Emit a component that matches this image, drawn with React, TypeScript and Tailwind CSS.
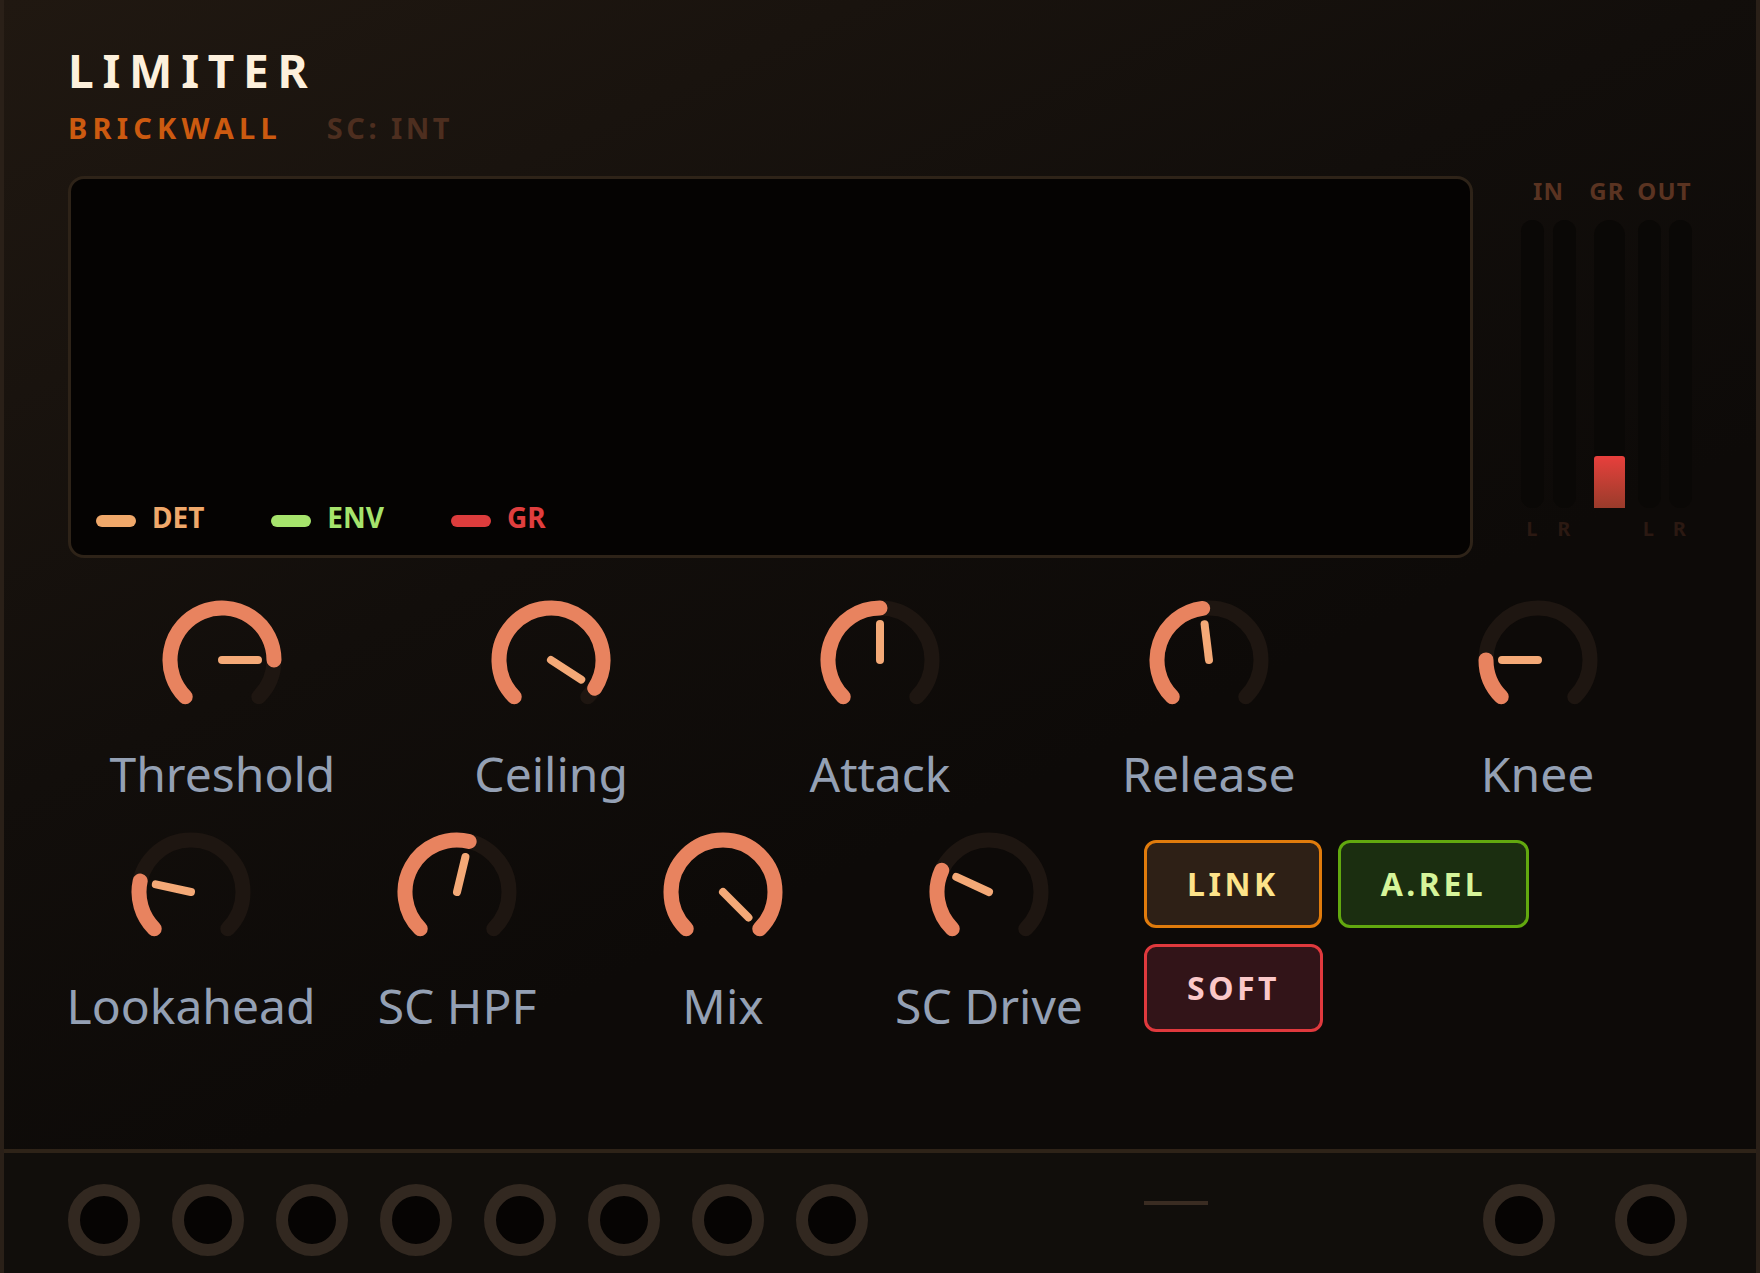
import React from 'react';

interface KnobProps {
    label: string;
    value: number;
}

const CX = 60;
const CY = 60;
const R = 52;

const pt = (deg: number, r: number) => {
    const a = (deg * Math.PI) / 180;
    return [CX + r * Math.sin(a), CY - r * Math.cos(a)];
};

const arc = (from: number, to: number) => {
    const [x0, y0] = pt(from, R);
    const [x1, y1] = pt(to, R);
    const large = to - from > 180 ? 1 : 0;
    return `M ${x0} ${y0} A ${R} ${R} 0 ${large} 1 ${x1} ${y1}`;
};

const Knob: React.FC<{ value: number }> = ({ value }) => {
    const end = -135 + 270 * value;
    const [ix, iy] = pt(end, 36);
    return (
        <svg width="120" height="120" viewBox="0 0 120 120" className="block">
            <path d={arc(-135, 135)} stroke="#1e1611" strokeWidth="15" fill="none" strokeLinecap="round" />
            {value > 0 && (
                <path d={arc(-135, end)} stroke="#e8835f" strokeWidth="15" fill="none" strokeLinecap="round" />
            )}
            <line x1={CX} y1={CY} x2={ix} y2={iy} stroke="#f4a977" strokeWidth="8" strokeLinecap="round" />
        </svg>
    );
};

const KnobCell: React.FC<KnobProps & { className?: string }> = ({ label, value, className = '' }) => (
    <div className={`flex flex-col items-center ${className}`}>
        <Knob value={value} />
        <div className="mt-[30px] whitespace-nowrap text-[48px] leading-none text-[#94a0b4]">{label}</div>
    </div>
);

const Jack: React.FC = () => (
    <div className="h-[72px] w-[72px] rounded-full border-[12px] border-[#322820] bg-[#060403]" />
);

const MeterBar: React.FC<{ wide?: boolean; fill?: number; label?: string }> = ({ wide, fill, label }) => (
    <div className="flex flex-col items-center">
        <div className={`relative h-[288px] rounded-full bg-[#0a0806] ${wide ? 'w-[31px]' : 'w-[23px]'}`}>
            {fill !== undefined && (
                <div
                    className="absolute bottom-0 left-0 w-full rounded-t-[3px] bg-gradient-to-b from-[#e83f3c] to-[#9a3b2b]"
                    style={{ height: fill }}
                />
            )}
        </div>
        <div className="mt-[11px] h-[20px] text-[20px] leading-none font-bold text-[#2b1912]">{label}</div>
    </div>
);

const LegendItem: React.FC<{ color: string; text: string; label: string }> = ({ color, text, label }) => (
    <div className="flex items-center gap-4">
        <div className={`mt-2 h-3 w-10 rounded-full ${color}`} />
        <span className={`text-[28px] leading-none font-bold ${text}`}>{label}</span>
    </div>
);

const App: React.FC = () => {
    return (
        <div className="min-h-screen border-x-4 border-[#2a2018] bg-[#0d0a08] bg-[linear-gradient(155deg,#201811_0%,#120e0b_38%,#0d0a08_60%)] font-['Noto_Sans',sans-serif]">
            <div className="px-16 pt-[47px]">
                <h1 className="text-[46px] leading-none font-bold tracking-[0.19em] text-[#fdf0dc]">LIMITER</h1>
                <div className="mt-5 flex gap-[45px] text-[29px] leading-none font-bold">
                    <span className="tracking-[0.18em] text-[#cc5a10]">BRICKWALL</span>
                    <span className="tracking-[0.12em] text-[#4d2e1f]">SC: INT</span>
                </div>

                <div className="mt-[34px] flex items-start gap-12">
                    {/* Scope */}
                    <div className="flex h-[382px] flex-1 flex-col justify-end rounded-2xl border-[3px] border-[#2e2318] bg-[#050302] pb-[24px] pl-[25px]">
                        <div className="flex items-center gap-[67px]">
                            <LegendItem color="bg-[#f0a86a]" text="text-[#f0a86a]" label="DET" />
                            <LegendItem color="bg-[#a6e36c]" text="text-[#a6e36c]" label="ENV" />
                            <LegendItem color="bg-[#dc3c3c]" text="text-[#e03e3e]" label="GR" />
                        </div>
                    </div>

                    {/* Meters */}
                    <div className="flex w-[171px] pt-[3px] text-[24px] leading-none font-bold tracking-[0.05em] text-[#5a3321]">
                        <div className="flex w-[55px] flex-col items-center">
                            <div className="h-[24px]">IN</div>
                            <div className="mt-[17px] flex gap-[9px]">
                                <MeterBar label="L" />
                                <MeterBar label="R" />
                            </div>
                        </div>
                        <div className="ml-[18px] flex w-[31px] flex-col items-center">
                            <div className="-ml-[5px] h-[24px]">GR</div>
                            <div className="mt-[17px]">
                                <MeterBar wide fill={52} />
                            </div>
                        </div>
                        <div className="ml-[12px] flex w-[55px] flex-col items-center">
                            <div className="h-[24px]">OUT</div>
                            <div className="mt-[17px] flex gap-[8px]">
                                <MeterBar label="L" />
                                <MeterBar label="R" />
                            </div>
                        </div>
                    </div>
                </div>

                {/* Knobs row 1 */}
                <div className="mt-[42px] grid grid-cols-5 gap-5">
                    <KnobCell label="Threshold" value={0.833} />
                    <KnobCell label="Ceiling" value={0.955} />
                    <KnobCell label="Attack" value={0.5} />
                    <KnobCell label="Release" value={0.474} />
                    <KnobCell label="Knee" value={0.167} />
                </div>

                {/* Knobs row 2 + toggles */}
                <div className="mt-[34px] flex gap-5">
                    <KnobCell className="w-[246px]" label="Lookahead" value={0.212} />
                    <KnobCell className="w-[246px]" label="SC HPF" value={0.55} />
                    <KnobCell className="w-[246px]" label="Mix" value={1} />
                    <KnobCell className="w-[246px]" label="SC Drive" value={0.258} />
                    <div className="ml-3 mt-2 flex w-[400px] flex-wrap content-start gap-4 text-[32px] leading-none font-bold tracking-[0.11em]">
                        <button className="rounded-xl border-[3px] border-[#e07b0c] bg-[#2e2016] px-10 py-[25px] text-[#fde38a]">LINK</button>
                        <button className="rounded-xl border-[3px] border-[#62a80f] bg-[#1b2e10] px-10 py-[25px] text-[#d6f59a]">A.REL</button>
                        <button className="rounded-xl border-[3px] border-[#e0393d] bg-[#321418] px-10 py-[25px] text-[#fbc8c8]">SOFT</button>
                    </div>
                </div>
            </div>

            {/* Jack strip */}
            <div className="mt-[117px] flex items-center border-t-4 border-[#2e2318] bg-[#110e0b] pl-16 pr-[69px] pt-[31px] pb-8">
                <div className="flex gap-8">
                    {Array.from({ length: 8 }).map((_, i) => (
                        <Jack key={i} />
                    ))}
                </div>
                <div className="mb-[34px] ml-[276px] h-1 w-16 bg-[#3a2c22]" />
                <div className="ml-auto flex gap-[60px]">
                    <Jack />
                    <Jack />
                </div>
            </div>
        </div>
    );
};

export default App;
